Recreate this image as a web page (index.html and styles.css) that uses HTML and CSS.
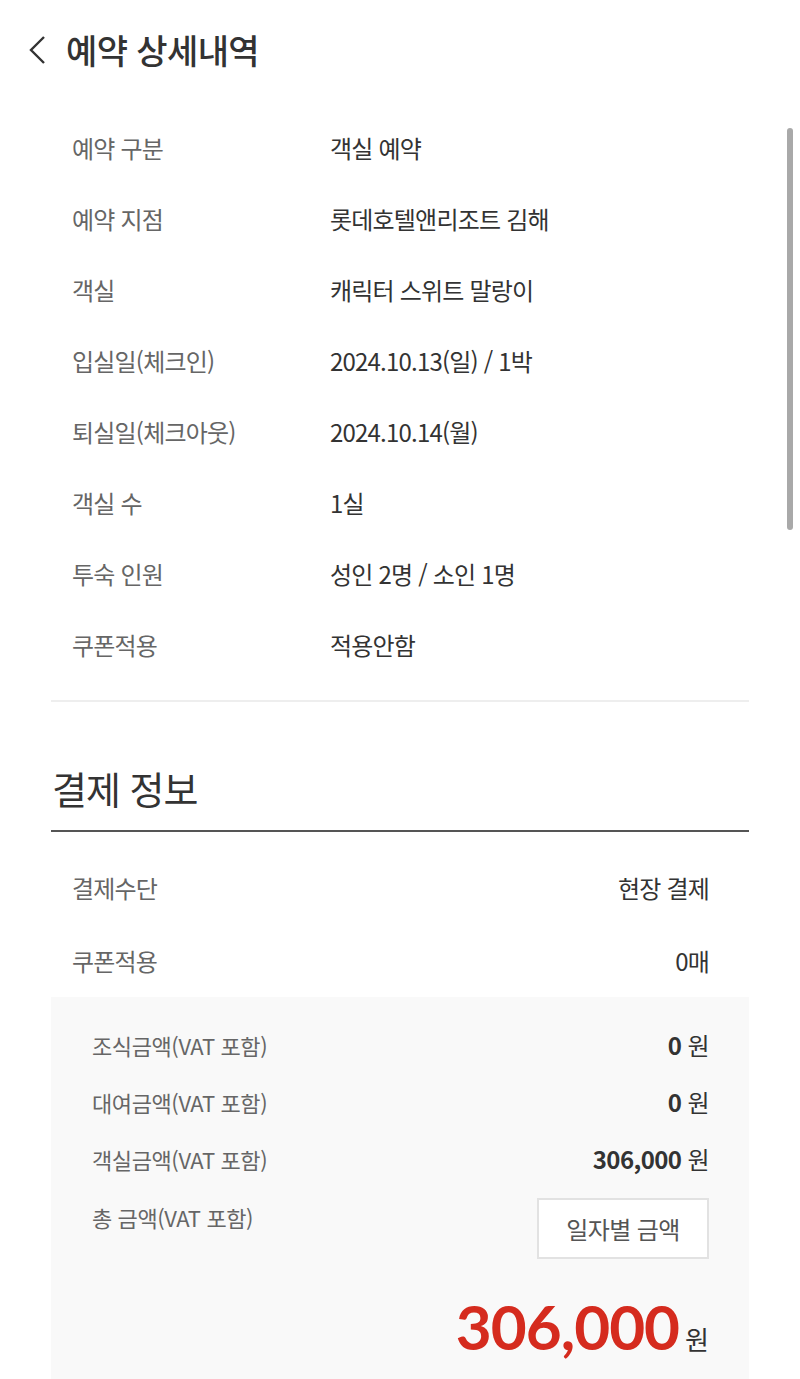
FILE: index.html
```html
<!DOCTYPE html>
<html lang="ko">
<head>
<meta charset="utf-8">
<title>예약 상세내역</title>
<link rel="stylesheet" href="styles.css">
</head>
<body>
<div class="page">
  <header class="topbar">
    <svg class="back" width="20" height="30" viewBox="0 0 20 30"><path d="M17 2 L4 15 L17 28" fill="none" stroke="#333" stroke-width="2.4"/></svg>
    <h1 class="title">예약 상세내역</h1>
  </header>

  <section class="info">
    <div class="row"><span class="label">예약 구분</span><span class="value">객실 예약</span></div>
    <div class="row"><span class="label">예약 지점</span><span class="value">롯데호텔앤리조트 김해</span></div>
    <div class="row"><span class="label">객실</span><span class="value">캐릭터 스위트 말랑이</span></div>
    <div class="row"><span class="label">입실일(체크인)</span><span class="value">2024.10.13(일) / 1박</span></div>
    <div class="row"><span class="label">퇴실일(체크아웃)</span><span class="value">2024.10.14(월)</span></div>
    <div class="row"><span class="label">객실 수</span><span class="value">1실</span></div>
    <div class="row"><span class="label">투숙 인원</span><span class="value">성인 2명 / 소인 1명</span></div>
    <div class="row"><span class="label">쿠폰적용</span><span class="value">적용안함</span></div>
  </section>

  <section class="pay">
    <h2 class="pay-title">결제 정보</h2>
    <div class="pay-row"><span class="label">결제수단</span><span class="value">현장 결제</span></div>
    <div class="pay-row"><span class="label">쿠폰적용</span><span class="value">0매</span></div>
    <div class="box">
      <div class="amt"><span class="amt-label">조식금액(VAT 포함)</span><span class="amt-val"><b>0</b> 원</span></div>
      <div class="amt"><span class="amt-label">대여금액(VAT 포함)</span><span class="amt-val"><b>0</b> 원</span></div>
      <div class="amt"><span class="amt-label">객실금액(VAT 포함)</span><span class="amt-val"><b>306,000</b> 원</span></div>
      <div class="amt total-row"><span class="amt-label">총 금액(VAT 포함)</span><button class="daily">일자별 금액</button></div>
      <div class="total"><span class="total-num">306,000</span><span class="total-unit">원</span></div>
    </div>
  </section>
</div>
<div class="scrollbar"></div>
</body>
</html>
```

FILE: styles.css
```css
* { box-sizing: border-box; }
html, body { margin: 0; padding: 0; background: #fff; }
body {
  font-family: "Noto Sans CJK KR", "Noto Sans", sans-serif;
  color: #333;
  width: 800px;
  height: 1379px;
  overflow: hidden;
  position: relative;
}
.topbar {
  display: flex;
  align-items: center;
  height: 98px;
  padding-left: 27px;
  gap: 19px;
}
.back { display: block; margin-top: 1px; }
.title {
  margin: 0;
  font-size: 34px;
  font-weight: 500;
  letter-spacing: -0.6px;
  color: #333;
}
.info {
  margin: 14px 51px 0;
  padding: 0 0 20px 21px;
  border-bottom: 2px solid #eeeeee;
}
.row {
  display: flex;
  align-items: center;
  height: 71px;
  font-size: 24px;
  letter-spacing: -0.8px;
}
.label { color: #666; width: 258px; flex: none; font-weight: 400; }
.value { color: #333; }
.pay { margin: 0 51px; }
.pay-title {
  margin: 0;
  padding: 62px 0 18px 1px;
  font-size: 38px;
  font-weight: 400;
  letter-spacing: -1px;
  color: #333;
  border-bottom: 2px solid #555;
  line-height: 48px;
}
.pay-row {
  display: flex;
  justify-content: space-between;
  align-items: center;
  height: 73px;
  padding: 0 40px 0 21px;
  font-size: 24px;
  letter-spacing: -0.8px;
}
.pay-row:first-of-type { margin-top: 19px; }
.pay-row .label { width: auto; }
.box {
  background: #f9f9f9;
  padding: 19px 40px 0 41px;
  height: 400px;
}
.amt {
  display: flex;
  justify-content: space-between;
  align-items: center;
  height: 57px;
  font-size: 22px;
  letter-spacing: -0.4px;
}
.amt-label { color: #666; }
.amt-val { color: #333; font-size: 24px; letter-spacing: -0.6px; }
.amt-val b { font-weight: 700; }
.total-row { align-items: flex-start; height: auto; }
.total-row .amt-label { margin-top: 15px; line-height: 30px; }
.daily {
  font-family: inherit;
  background: #fff;
  border: 2px solid #e2e2e2;
  width: 172px;
  height: 61px;
  font-size: 24px;
  letter-spacing: -0.6px;
  color: #555;
  margin-top: 11px;
  padding: 0;
}
.total {
  display: flex;
  justify-content: flex-end;
  align-items: baseline;
  gap: 6px;
  margin-top: 36px;
  line-height: 62px;
}
.total-num {
  color: #d52b1e;
  font-size: 62px;
  font-weight: 700;
  letter-spacing: -1px;
  font-family: "Lato", "Noto Sans", sans-serif;
}
.total-unit { font-size: 26px; color: #333; }
.scrollbar {
  position: absolute;
  left: 787px;
  top: 128px;
  width: 6px;
  height: 402px;
  border-radius: 3px;
  background: #a9a9a9;
}
```
